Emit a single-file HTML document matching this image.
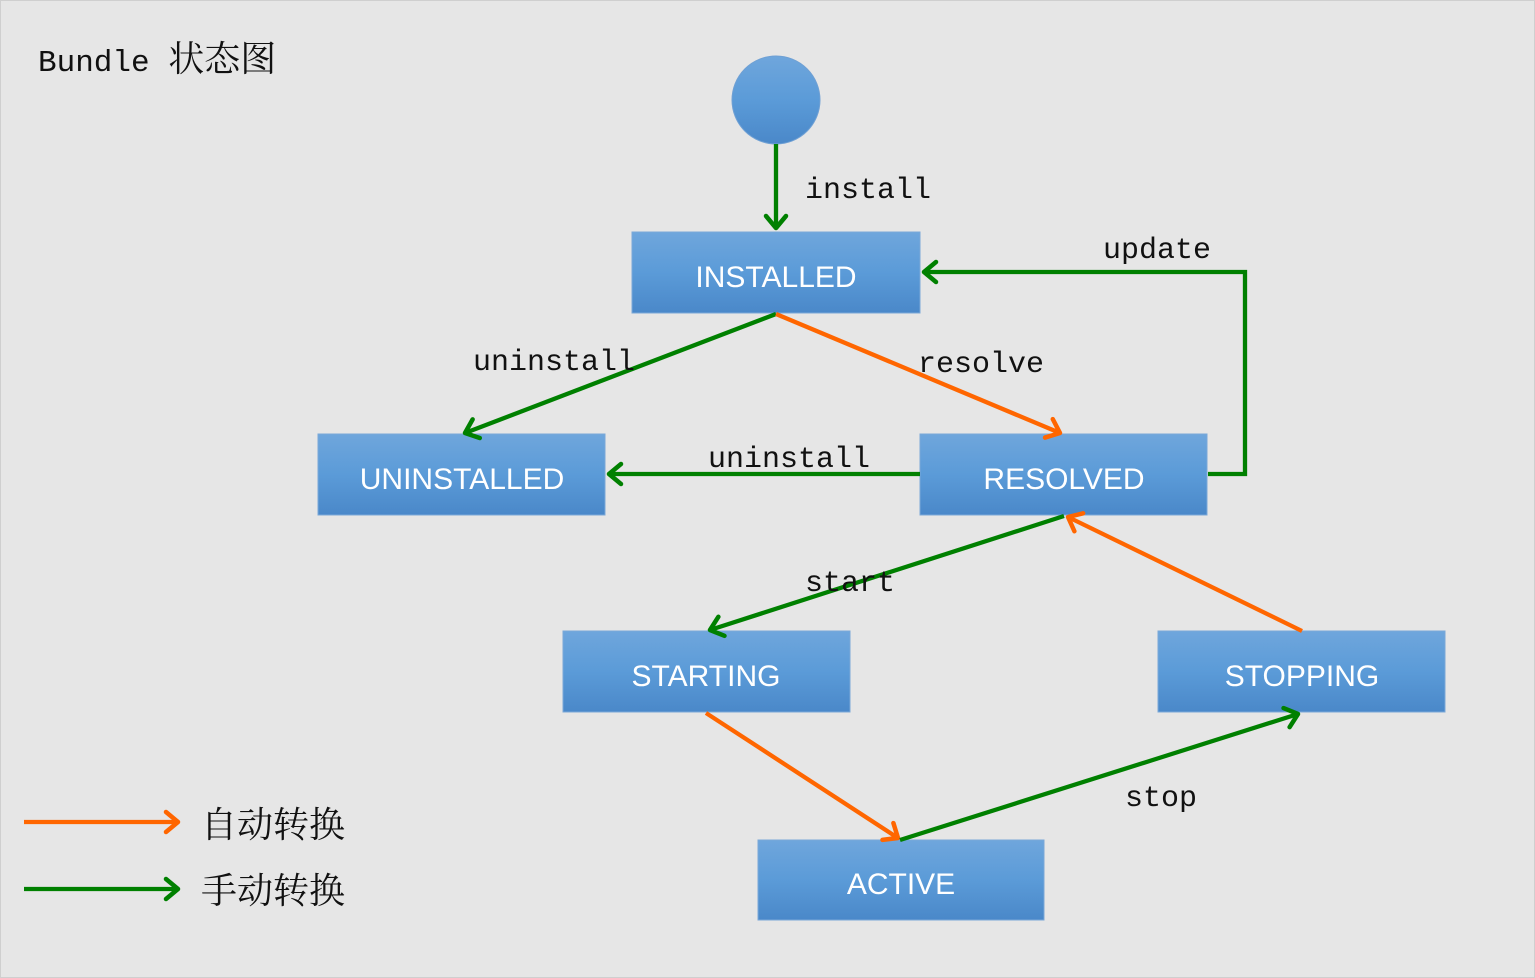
<!DOCTYPE html>
<html><head><meta charset="utf-8"><style>
html,body{margin:0;padding:0;background:#e6e6e6}
svg{display:block}
.lbl{font-family:"Liberation Mono","Noto Serif CJK SC",monospace;font-size:30px;fill:#111}
.bt{font-family:"Liberation Sans","DejaVu Sans",sans-serif;font-size:30px;fill:#fff;text-anchor:middle}
.cn{font-family:"Liberation Serif","Noto Serif CJK SC",serif;font-size:36px;fill:#111}
</style></head><body>
<svg width="1535" height="978" viewBox="0 0 1535 978" xmlns="http://www.w3.org/2000/svg">
<defs>
<linearGradient id="g" x1="0" y1="0" x2="0" y2="1">
<stop offset="0" stop-color="#6fa6dc"/><stop offset="0.5" stop-color="#5b9bd8"/><stop offset="1" stop-color="#4a88c9"/>
</linearGradient>
<marker id="ag" markerUnits="userSpaceOnUse" markerWidth="30" markerHeight="30" refX="18" refY="12" orient="auto" viewBox="0 0 30 24">
<path d="M6,2 L18,12 L6,22" fill="none" stroke="#008000" stroke-width="4.5" stroke-linecap="round" stroke-linejoin="round"/></marker>
<marker id="ao" markerUnits="userSpaceOnUse" markerWidth="30" markerHeight="30" refX="18" refY="12" orient="auto" viewBox="0 0 30 24">
<path d="M6,2 L18,12 L6,22" fill="none" stroke="#ff6600" stroke-width="4.5" stroke-linecap="round" stroke-linejoin="round"/></marker>
</defs>
<rect x="0.5" y="0.5" width="1534" height="977" fill="#e6e6e6" stroke="#cfcfcf"/>
<text x="38" y="71" class="cn" font-size="34"><tspan font-family="Liberation Mono" font-size="31">Bundle </tspan>状态图</text>
<circle cx="776" cy="100" r="44" fill="url(#g)" stroke="#6fa0d4"/>
<g fill="url(#g)" stroke="#7aa8d8" stroke-width="1">
<rect x="632" y="232" width="288" height="81"/>
<rect x="318" y="434" width="287" height="81"/>
<rect x="920" y="434" width="287" height="81"/>
<rect x="563" y="631" width="287" height="81"/>
<rect x="1158" y="631" width="287" height="81"/>
<rect x="758" y="840" width="286" height="80"/>
</g>
<text class="bt" x="776" y="287">INSTALLED</text>
<text class="bt" x="462" y="489">UNINSTALLED</text>
<text class="bt" x="1064" y="489">RESOLVED</text>
<text class="bt" x="706" y="686">STARTING</text>
<text class="bt" x="1302" y="686">STOPPING</text>
<text class="bt" x="901" y="894">ACTIVE</text>
<g fill="none" stroke-width="4.3">
<path d="M776,144 L776,228" stroke="#008000" marker-end="url(#ag)"/>
<path d="M776,314 L465,433" stroke="#008000" marker-end="url(#ag)"/>
<path d="M776,314 L1060,433" stroke="#ff6600" marker-end="url(#ao)"/>
<path d="M1208,474 L1245,474 L1245,272 L924,272" stroke="#008000" marker-end="url(#ag)"/>
<path d="M920,474 L609,474" stroke="#008000" marker-end="url(#ag)"/>
<path d="M1064,516 L710,630" stroke="#008000" marker-end="url(#ag)"/>
<path d="M1302,631 L1068,517" stroke="#ff6600" marker-end="url(#ao)"/>
<path d="M706,713 L898,838" stroke="#ff6600" marker-end="url(#ao)"/>
<path d="M900,840 L1298,714" stroke="#008000" marker-end="url(#ag)"/>
<path d="M24,822 L178,822" stroke="#ff6600" marker-end="url(#ao)"/>
<path d="M24,889 L178,889" stroke="#008000" marker-end="url(#ag)"/>
</g>
<text class="lbl" x="805" y="198">install</text>
<text class="lbl" x="1103" y="258">update</text>
<text class="lbl" x="473" y="370">uninstall</text>
<text class="lbl" x="918" y="372">resolve</text>
<text class="lbl" x="708" y="467">uninstall</text>
<text class="lbl" x="805" y="591">start</text>
<text class="lbl" x="1125" y="806">stop</text>
<text class="cn" x="201" y="837">自动转换</text>
<text class="cn" x="201" y="903">手动转换</text>
</svg>
</body></html>
